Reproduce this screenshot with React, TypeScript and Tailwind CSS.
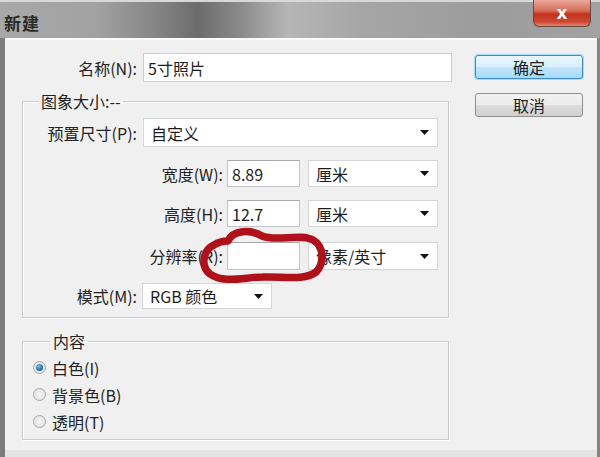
import React from 'react'

const font = "font-['Noto_Sans_CJK_SC','Microsoft_YaHei',sans-serif]"

function Arrow() {
  return (
    <svg width="9" height="5" viewBox="0 0 9 5" className="shrink-0">
      <polygon points="0,0 9,0 4.5,5" fill="#111" />
    </svg>
  )
}

function Select({ value, w, h }: { value: string; w: string; h: string }) {
  return (
    <div className={`${w} ${h} flex items-center justify-between bg-white border border-[#d6d6d6] pl-[7px] pr-[8px] text-[16px] text-[#1e1e1e]`}>
      <span>{value}</span>
      <Arrow />
    </div>
  )
}

function Field({ value, w, h }: { value: string; w: string; h: string }) {
  return (
    <div className={`${w} ${h} flex items-center bg-white border border-[#c4c4c4] border-t-[#a9a9a9] px-[4px] text-[16px] text-[#1e1e1e]`}>
      {value}
    </div>
  )
}

function Radio({ checked, label }: { checked?: boolean; label: string }) {
  return (
    <div className="flex items-center gap-[6px] h-[27px]">
      <span className="w-[13px] h-[13px] rounded-full border border-[#a6a6a6] bg-[radial-gradient(circle,#f4f4f4_0%,#dedede_100%)] flex items-center justify-center">
        {checked && <span className="w-[7px] h-[7px] rounded-full bg-[radial-gradient(circle_at_40%_35%,#7cc3ec_0%,#1f6fa8_60%,#11466f_100%)]" />}
      </span>
      <span className="text-[16px] text-[#222]">{label}</span>
    </div>
  )
}

export default function App() {
  return (
    <div className={`relative w-[600px] h-[457px] flex flex-col bg-[#9a9a9a] ${font}`}>
      {/* title bar */}
      <div className="h-[38px] flex items-start justify-between border-t-2 border-[#d8d8d8] bg-[linear-gradient(90deg,#a8a8a8_0%,#a2a2a2_16%,#858585_26%,#6c6c6c_33%,#8a8a8a_40%,#b6b6b6_48%,#a6a6a6_60%,#9c9c9c_80%,#a2a2a2_100%)]">
        <span className="ml-[4px] mt-[8px] text-[17px] font-bold text-[#2a2a2a] tracking-[1px]">新建</span>
        <div className="mr-[9px] -mt-[2px] w-[58px] h-[27px] rounded-b-[6px] border border-[#6b4a44] border-t-0 bg-[linear-gradient(180deg,#e9a899_0%,#d8705c_40%,#c1311c_55%,#cf4a33_85%,#e08a6e_100%)] flex items-center justify-center">
          <span className="text-white text-[17px] font-bold leading-none font-['DejaVu_Sans',sans-serif]">x</span>
        </div>
      </div>

      {/* client */}
      <div className="flex-1 flex border-l-[5px] border-[#7c7c7c] border-r-[3px] border-r-[#848484]">
        <div className="flex-1 flex flex-col bg-[#f0f0f0] border-t-2 border-[#fbfbfb] border-b-[7px] border-b-[#e4e4e4]">
          <div className="flex">
            {/* left column */}
            <div className="w-[447px] flex flex-col">
              <div className="flex items-center mt-[13px]">
                <span className="w-[132px] text-right text-[16px] text-[#222]">名称(N):</span>
                <div className="ml-[6px] w-[309px] h-[29px] flex items-center bg-white border border-[#cdcdcd] px-[4px] text-[16px] text-[#1e1e1e]">5寸照片</div>
              </div>

              <fieldset className="ml-[17px] mt-[8px] w-[427px] border border-[#cbcbcb] shadow-[inset_1px_1px_0_#fff,1px_1px_0_#fff] pb-[8px]">
                <legend className="ml-[16px] px-[2px] text-[16px] leading-[22px] text-[#222]">图象大小:--</legend>
                <div className="flex items-center mt-[6px]">
                  <span className="w-[114px] text-right text-[16px] text-[#222]">预置尺寸(P):</span>
                  <div className="ml-[6px]">
                    <Select value="自定义" w="w-[295px]" h="h-[29px]" />
                  </div>
                </div>
                <div className="flex items-center mt-[13px]">
                  <span className="w-[200px] text-right text-[16px] text-[#222]">宽度(W):</span>
                  <div className="ml-[4px]"><Field value="8.89" w="w-[73px]" h="h-[27px]" /></div>
                  <div className="ml-[8px]"><Select value="厘米" w="w-[130px]" h="h-[27px]" /></div>
                </div>
                <div className="flex items-center mt-[13px]">
                  <span className="w-[200px] text-right text-[16px] text-[#222]">高度(H):</span>
                  <div className="ml-[4px]"><Field value="12.7" w="w-[73px]" h="h-[27px]" /></div>
                  <div className="ml-[8px]"><Select value="厘米" w="w-[130px]" h="h-[27px]" /></div>
                </div>
                <div className="flex items-center mt-[15px]">
                  <span className="w-[200px] text-right text-[16px] text-[#222]">分辨率(R):</span>
                  <div className="ml-[4px]"><Field value="" w="w-[73px]" h="h-[28px]" /></div>
                  <div className="ml-[8px]"><Select value="像素/英寸" w="w-[130px]" h="h-[28px]" /></div>
                </div>
                <div className="flex items-center mt-[13px]">
                  <span className="w-[114px] text-right text-[16px] text-[#222]">模式(M):</span>
                  <div className="ml-[5px]">
                    <Select value="RGB 颜色" w="w-[130px]" h="h-[26px]" />
                  </div>
                </div>
              </fieldset>

              <fieldset className="ml-[17px] mt-[12px] w-[427px] border border-[#cbcbcb] shadow-[inset_1px_1px_0_#fff,1px_1px_0_#fff] pb-[4px] pl-[10px]">
                <legend className="ml-[17px] px-[3px] text-[16px] leading-[22px] text-[#222]">内容</legend>
                <div className="flex flex-col mt-[2px]">
                  <Radio checked label="白色(I)" />
                  <Radio label="背景色(B)" />
                  <Radio label="透明(T)" />
                </div>
              </fieldset>
            </div>

            {/* buttons */}
            <div className="ml-[23px] flex flex-col gap-[14px] mt-[15px]">
              <button className="w-[108px] h-[24px] rounded-[3px] border border-[#3c8fc6] shadow-[0_0_0_1px_#9fdcf5] bg-[linear-gradient(180deg,#eaf6fd_0%,#d9f0fc_50%,#bee6fd_51%,#a7d9f5_100%)] text-[16px] leading-none text-[#222]">确定</button>
              <button className="w-[108px] h-[24px] rounded-[3px] border border-[#8e8f8f] bg-[linear-gradient(180deg,#f2f2f2_0%,#ebebeb_50%,#dddddd_51%,#cfcfcf_100%)] text-[16px] leading-none text-[#222]">取消</button>
            </div>
          </div>
        </div>
      </div>

      {/* red annotation */}
      <svg className="absolute inset-0 pointer-events-none" width="600" height="457" viewBox="0 0 600 457">
        <path
          d="M 228 241 C 233 230, 250 229, 262 236 C 276 242, 300 233, 313 240 C 325 247, 324 264, 316 272 C 305 281, 281 276, 263 277 C 245 277, 224 284, 210 274 C 200 266, 203 250, 214 245 C 220 241, 224 241, 228 241 Z"
          fill="none"
          stroke="#b0101a"
          strokeWidth="7.5"
          strokeLinejoin="round"
        />
      </svg>
    </div>
  )
}
